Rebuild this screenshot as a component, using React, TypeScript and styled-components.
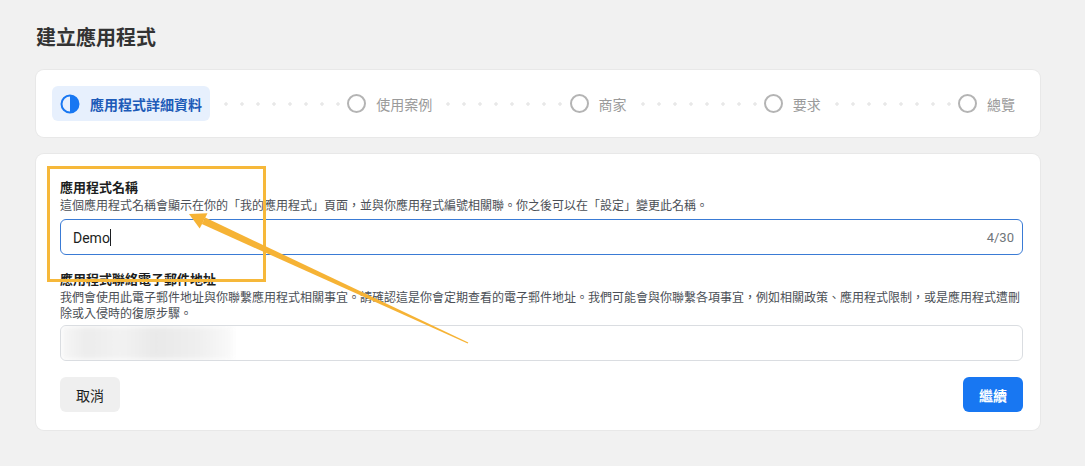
import React from 'react';
import styled, { createGlobalStyle } from 'styled-components';

const GlobalStyle = createGlobalStyle`
  html, body {
    margin: 0;
    padding: 0;
    background: #f1f1f1;
    font-family: "Noto Sans CJK TC", "Noto Sans", sans-serif;
    color: #1c1e21;
  }
  * { box-sizing: border-box; }
`;

const Page = styled.div`
  position: relative;
  width: 1085px;
  height: 466px;
  overflow: hidden;
  padding: 23px 45px 0 36px;
`;

const Title = styled.h1`
  margin: 0 0 19px;
  font-size: 20px;
  line-height: 28px;
  font-weight: 700;
  color: #333;
`;

const Card = styled.div`
  background: #fff;
  border-radius: 8px;
  box-shadow: 0 0 0 1px #e8e8e8;
`;

const StepperCard = styled(Card)`
  height: 67px;
  display: flex;
  align-items: center;
  padding: 0 25px 0 16px;
  margin-bottom: 17px;
`;

const Step = styled.div<{ $active?: boolean }>`
  display: flex;
  align-items: center;
  gap: 10px;
  height: 35px;
  padding: ${p => (p.$active ? '0 8px 0 8px' : '0')};
  border-radius: 6px;
  background: ${p => (p.$active ? '#e7f0fd' : 'transparent')};
  font-size: 14px;
  font-weight: ${p => (p.$active ? 700 : 400)};
  color: ${p => (p.$active ? '#1d5bb8' : '#9a9a9a')};
  white-space: nowrap;
`;

const Circle = styled.span`
  width: 19px;
  height: 19px;
  border-radius: 50%;
  border: 2px solid #b4b4b4;
  flex: none;
`;

const Connector = styled.div`
  flex: 1;
  height: 4px;
  margin: 0 0 0 4px;
  background-image: radial-gradient(circle, #e8e8e8 1.5px, transparent 1.8px);
  background-size: 16px 4px;
  background-repeat: repeat-x;
  background-position: 4px 0;
`;

const FormCard = styled(Card)`
  height: 276px;
  padding: 24px 17px 16px 24px;
  display: flex;
  flex-direction: column;
`;

const Label = styled.div<{ $spaced?: boolean }>`
  font-size: 13px;
  line-height: 18px;
  font-weight: 700;
  color: #1c1e21;
  margin-top: ${p => (p.$spaced ? '15px' : '0')};
`;

const Hint = styled.div`
  font-size: 12px;
  line-height: 16px;
  color: #4b4f56;
  margin-top: 1px;
`;

const InputBox = styled.div<{ $focused?: boolean }>`
  position: relative;
  height: 36px;
  margin-top: ${p => (p.$focused ? '6px' : '4px')};
  border: 1px solid ${p => (p.$focused ? '#3a7bd5' : '#dadde1')};
  border-radius: 6px;
  display: flex;
  align-items: center;
  padding: 0 8px 0 12px;
  font-size: 14px;
  overflow: hidden;
`;

const Value = styled.span`
  flex: 1;
  font-family: Roboto, "Noto Sans", sans-serif;
  color: #1c1e21;
`;

const Caret = styled.span`
  display: inline-block;
  width: 1px;
  height: 17px;
  background: #1c1e21;
  vertical-align: -3px;
`;

const Counter = styled.span`
  font-family: Roboto, "Noto Sans", sans-serif;
  font-size: 13px;
  color: #70757a;
`;

const Redacted = styled.div`
  width: 172px;
  height: 34px;
  margin-left: -12px;
  background: linear-gradient(90deg, #f7f7f7 0%, #ececec 15%, #f2f2f2 35%, #e9e9e9 55%, #efefef 80%, #fafafa 100%);
  filter: blur(3px);
`;

const Actions = styled.div`
  display: flex;
  justify-content: space-between;
  margin-top: 16px;
`;

const Button = styled.button<{ $primary?: boolean }>`
  height: 35px;
  padding: 0 16px;
  border: none;
  border-radius: 6px;
  font-family: "Noto Sans CJK TC", sans-serif;
  font-size: 14px;
  font-weight: ${p => (p.$primary ? 700 : 400)};
  background: ${p => (p.$primary ? '#1877f2' : '#efefef')};
  color: ${p => (p.$primary ? '#fff' : '#1c1e21')};
`;

const Overlay = styled.svg`
  position: absolute;
  left: 0;
  top: 0;
  pointer-events: none;
`;

const HalfCircle = () => (
  <svg width="20" height="20" viewBox="0 0 20 20">
    <circle cx="10" cy="10" r="8.5" fill="none" stroke="#1877f2" strokeWidth="2" />
    <path d="M10 1.5 A8.5 8.5 0 0 1 10 18.5 Z" fill="#1877f2" />
  </svg>
);

const steps = ['使用案例', '商家', '要求', '總覽'];

const App = () => (
  <>
    <GlobalStyle />
    <Page>
      <Title>建立應用程式</Title>
      <StepperCard>
        <Step $active>
          <HalfCircle />
          應用程式詳細資料
        </Step>
        {steps.map(s => (
          <React.Fragment key={s}>
            <Connector />
            <Step>
              <Circle />
              {s}
            </Step>
          </React.Fragment>
        ))}
      </StepperCard>
      <FormCard>
        <Label>應用程式名稱</Label>
        <Hint>這個應用程式名稱會顯示在你的「我的應用程式」頁面，並與你應用程式編號相關聯。你之後可以在「設定」變更此名稱。</Hint>
        <InputBox $focused>
          <Value>Demo<Caret /></Value>
          <Counter>4/30</Counter>
        </InputBox>
        <Label $spaced>應用程式聯絡電子郵件地址</Label>
        <Hint>我們會使用此電子郵件地址與你聯繫應用程式相關事宜。請確認這是你會定期查看的電子郵件地址。我們可能會與你聯繫各項事宜，例如相關政策、應用程式限制，或是應用程式遭刪除或入侵時的復原步驟。</Hint>
        <InputBox>
          <Redacted />
        </InputBox>
        <Actions>
          <Button>取消</Button>
          <Button $primary>繼續</Button>
        </Actions>
      </FormCard>
      <Overlay width="1085" height="466" viewBox="0 0 1085 466">
        <rect x="48.5" y="167.5" width="216" height="113" fill="none" stroke="#f6b83a" strokeWidth="3" />
        <polygon
          points="205.2,217.6 468.3,342.4 467.7,343.6 201.8,224"
          fill="#f6b335"
        />
        <polygon points="189,214 207.5,213.2 199.7,228.6" fill="#f6b335" />
      </Overlay>
    </Page>
  </>
);

export default App;
